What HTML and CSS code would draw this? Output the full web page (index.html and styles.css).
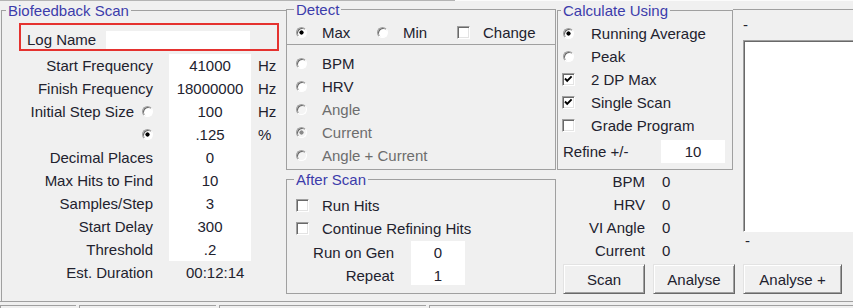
FILE: index.html
```html
<!DOCTYPE html>
<html lang="en">
<head>
    <meta charset="UTF-8">
    <title>Biofeedback Scan</title>
    <link rel="stylesheet" href="styles.css">
</head>
<body>
    <div class="top-edge"><span class="edge-dark"></span><span class="edge-light"></span></div>

    <div class="main">
        <!-- left: scan settings -->
        <fieldset class="group scan">
            <legend>Biofeedback Scan</legend>
            <div class="log-box">
                <span class="log-label">Log Name</span>
                <span class="log-input"></span>
            </div>
            <div class="scan-grid">
                <span class="lbl">Start Frequency</span><span class="val">41000</span><span class="unit">Hz</span>
                <span class="lbl">Finish Frequency</span><span class="val">18000000</span><span class="unit">Hz</span>
                <span class="lbl">Initial Step Size <span class="radio"></span></span><span class="val">100</span><span class="unit">Hz</span>
                <span class="lbl"><span class="radio on"></span></span><span class="val">.125</span><span class="unit">%</span>
                <span class="lbl">Decimal Places</span><span class="val">0</span><span class="unit"></span>
                <span class="lbl">Max Hits to Find</span><span class="val">10</span><span class="unit"></span>
                <span class="lbl">Samples/Step</span><span class="val">3</span><span class="unit"></span>
                <span class="lbl">Start Delay</span><span class="val">300</span><span class="unit"></span>
                <span class="lbl">Threshold</span><span class="val">.2</span><span class="unit"></span>
                <span class="lbl">Est. Duration</span><span class="val plain">00:12:14</span><span class="unit"></span>
            </div>
        </fieldset>

        <!-- middle: detect + after scan -->
        <div class="mid">
            <fieldset class="group detect">
                <legend>Detect</legend>
                <div class="detect-row">
                    <span class="opt w-max"><span class="ind"><span class="radio on"></span></span>Max</span>
                    <span class="opt w-min"><span class="ind"><span class="radio"></span></span>Min</span>
                    <span class="opt"><span class="ind"><span class="check"></span></span>Change</span>
                </div>
            </fieldset>
            <div class="opts">
                <div class="opt"><span class="ind"><span class="radio"></span></span>BPM</div>
                <div class="opt"><span class="ind"><span class="radio"></span></span>HRV</div>
                <div class="opt dim"><span class="ind"><span class="radio"></span></span>Angle</div>
                <div class="opt dim"><span class="ind"><span class="radio on"></span></span>Current</div>
                <div class="opt dim"><span class="ind"><span class="radio"></span></span>Angle + Current</div>
            </div>
            <fieldset class="group after">
                <legend>After Scan</legend>
                <div class="after-body">
                    <div class="opt"><span class="ind"><span class="check"></span></span>Run Hits</div>
                    <div class="opt"><span class="ind"><span class="check"></span></span>Continue Refining Hits</div>
                    <div class="gen-grid">
                        <span class="gen-lbl">Run on Gen</span><span class="val">0</span>
                        <span class="gen-lbl">Repeat</span><span class="val">1</span>
                    </div>
                </div>
            </fieldset>
        </div>

        <!-- right: calculate, readouts, graph, buttons -->
        <div class="side">
            <fieldset class="group calc">
                <legend>Calculate Using</legend>
                <div class="calc-list">
                    <div class="opt"><span class="ind"><span class="radio on"></span></span>Running Average</div>
                    <div class="opt"><span class="ind"><span class="radio"></span></span>Peak</div>
                    <div class="opt"><span class="ind cb"><span class="check"><svg viewBox="0 0 11 11"><path d="M2 4.5 L4.2 6.8 L8.6 2.3"/></svg></span></span>2 DP Max</div>
                    <div class="opt"><span class="ind cb"><span class="check"><svg viewBox="0 0 11 11"><path d="M2 4.5 L4.2 6.8 L8.6 2.3"/></svg></span></span>Single Scan</div>
                    <div class="opt"><span class="ind cb"><span class="check"></span></span>Grade Program</div>
                </div>
                <div class="refine">
                    <span class="refine-lbl">Refine +/-</span>
                    <span class="val refine-val">10</span>
                </div>
            </fieldset>

            <div class="graph-panel">
                <div class="dash">-</div>
                <div class="graph"></div>
                <div class="dash low">-</div>
            </div>

            <div class="stats">
                <span class="stat-lbl">BPM</span><span class="stat-val">0</span>
                <span class="stat-lbl">HRV</span><span class="stat-val">0</span>
                <span class="stat-lbl">VI Angle</span><span class="stat-val">0</span>
                <span class="stat-lbl">Current</span><span class="stat-val">0</span>
            </div>

            <div class="buttons">
                <button class="btn">Scan</button>
                <button class="btn">Analyse</button>
                <button class="btn wide">Analyse +</button>
            </div>
        </div>
    </div>

    <div class="bottom-line"></div>
    <div class="status-bar">
        <span class="panel p1"></span>
        <span class="panel p2"></span>
        <span class="panel p3"></span>
        <span class="panel p4"></span>
    </div>
</body>
</html>
```

FILE: styles.css
```css
* {
    box-sizing: border-box;
}

body {
    margin: 0;
    width: 853px;
    height: 308px;
    overflow: hidden;
    background-color: #f0f0f0;
    font-family: "Liberation Sans", Arial, sans-serif;
    font-size: 15px;
    line-height: 17px;
    color: #22222e;
}

.top-edge {
    display: flex;
    height: 2px;
}

.edge-dark {
    width: 455px;
    border-top: 1px solid #b4b4b4;
}

.edge-light {
    flex: 1;
    border-top: 1px solid #fbfbfb;
}

.main {
    display: flex;
    height: 299px;
}

/* group boxes */
.group {
    margin: 0;
    padding: 0;
    min-width: 0;
    border: 1px solid #a0a0a0;
}

.group legend {
    padding: 0 2px;
    color: #3c3cab;
    line-height: 17px;
}

/* radios and checkboxes */
.radio {
    display: inline-block;
    width: 11px;
    height: 11px;
    border-radius: 50%;
    background: #fff;
    border: 1px solid;
    border-color: #a0a0a0 #fff #fff #a0a0a0;
    box-shadow: inset 1px 1px 0 #696969;
}

.radio.on {
    background: radial-gradient(circle at 50% 50%, #000 0 1.8px, #fff 2.4px);
}

.dim {
    color: #6d6d6d;
}

.dim .radio {
    background: #f4f4f4;
}

.dim .radio.on {
    background: radial-gradient(circle at 50% 50%, #8a8a8a 0 1.8px, #f4f4f4 2.4px);
}

.check {
    display: flex;
    width: 13px;
    height: 13px;
    background: #fff;
    border: 1px solid;
    border-color: #a0a0a0 #fff #fff #a0a0a0;
    box-shadow: inset 1px 1px 0 #696969, inset -1px -1px 0 #e3e3e3;
}

.check svg {
    width: 11px;
    height: 11px;
}

.check path {
    fill: none;
    stroke: #000;
    stroke-width: 1.9;
}

.opt {
    display: flex;
    align-items: center;
    height: 23px;
}

.ind {
    display: flex;
    align-items: center;
    width: 26px;
}

/* biofeedback scan */
.scan {
    width: 285px;
    height: 299px;
    margin-left: 1px;
    border-right: none;
    border-bottom: none;
}

.scan legend {
    margin-left: 4px;
}

.log-box {
    display: flex;
    align-items: flex-end;
    width: 260px;
    height: 28px;
    margin: 4px 0 0 17px;
    padding-left: 6px;
    border: 2px solid #e5322f;
}

.log-label {
    width: 79px;
    line-height: 18px;
}

.log-input {
    width: 144px;
    height: 18px;
    background: #fff;
}

.scan-grid {
    display: grid;
    grid-template-columns: 167px 82px 1fr;
    grid-auto-rows: 23px;
    margin-top: 3px;
}

.lbl {
    display: flex;
    justify-content: flex-end;
    align-items: center;
    gap: 8px;
    padding-right: 16px;
}

.val {
    background: #fff;
    text-align: center;
    line-height: 23px;
}

.val.plain {
    background: none;
    text-align: left;
    padding-left: 17px;
}

.unit {
    padding-left: 7px;
    line-height: 23px;
}

/* middle column */
.mid {
    display: flex;
    flex-direction: column;
    width: 270px;
}

.detect {
    height: 44px;
    margin-top: -1px;
}

.detect legend {
    margin-left: 7px;
}

.detect-row {
    display: flex;
    padding: 3px 0 0 9px;
}

.w-max {
    width: 81px;
}

.w-min {
    width: 80px;
}

.opts {
    border: 1px solid #a0a0a0;
    border-top: none;
    padding: 7px 0 2px 9px;
}

.after {
    height: 123px;
    margin-top: 1px;
}

.after legend {
    margin-left: 7px;
}

.after-body {
    padding: 6px 0 0 9px;
}

.gen-grid {
    display: grid;
    grid-template-columns: 99px 54px;
    grid-template-rows: 23px 21px;
    column-gap: 16px;
    margin-top: 1px;
}

.gen-lbl {
    text-align: right;
    padding-right: 1px;
    line-height: 23px;
}

/* right side */
.side {
    display: grid;
    grid-template-columns: 176px 120px;
    grid-template-rows: 168px 92px 32px;
    margin-left: 1px;
}

.calc {
    grid-column: 1;
    grid-row: 1;
}

.calc legend {
    margin-left: 3px;
}

.calc-list {
    padding-top: 3px;
}

.calc .ind {
    width: 33px;
    padding-left: 5px;
}

.calc .ind.cb {
    padding-left: 4px;
}

.refine {
    display: flex;
    align-items: center;
    margin-top: 3px;
}

.refine-lbl {
    width: 103px;
    padding-left: 5px;
}

.refine-val {
    width: 64px;
    height: 23px;
}

.graph-panel {
    grid-column: 2;
    grid-row: 1 / 3;
    margin-top: 7px;
    padding: 6px 0 0 10px;
    border-top: 1px solid #a0a0a0;
}

.graph {
    width: 130px;
    height: 192px;
    margin-top: 7px;
    background: #fff;
    border: 1px solid;
    border-color: #a0a0a0 #fff #fff #a0a0a0;
    box-shadow: inset 1px 1px 0 #696969;
}

.dash.low {
    padding-left: 2px;
}

.stats {
    grid-column: 1;
    grid-row: 2;
    display: grid;
    grid-template-columns: 88px 1fr;
    grid-auto-rows: 23px;
    line-height: 23px;
}

.stat-lbl {
    text-align: right;
}

.stat-val {
    padding-left: 17px;
}

.buttons {
    grid-column: 1 / 3;
    grid-row: 3;
    display: flex;
    gap: 8px;
    padding: 2px 0 0 6px;
}

.btn {
    width: 82px;
    height: 30px;
    padding: 0;
    font: inherit;
    color: inherit;
    background: #f0f0f0;
    border: 1px solid;
    border-color: #e3e3e3 #696969 #696969 #e3e3e3;
    box-shadow: inset 1px 1px 0 #fff, inset -1px -1px 0 #a0a0a0;
}

.btn.wide {
    width: 99px;
}

/* bottom edge */
.bottom-line {
    height: 1px;
    background: #a0a0a0;
}

.status-bar {
    display: flex;
    gap: 3px;
    height: 6px;
    padding-top: 3px;
}

.panel {
    border-top: 1px solid #a0a0a0;
    border-left: 1px solid #a0a0a0;
}

.p1 { width: 76px; }
.p2 { width: 137px; }
.p3 { width: 207px; }
.p4 { flex: 1; }
```
